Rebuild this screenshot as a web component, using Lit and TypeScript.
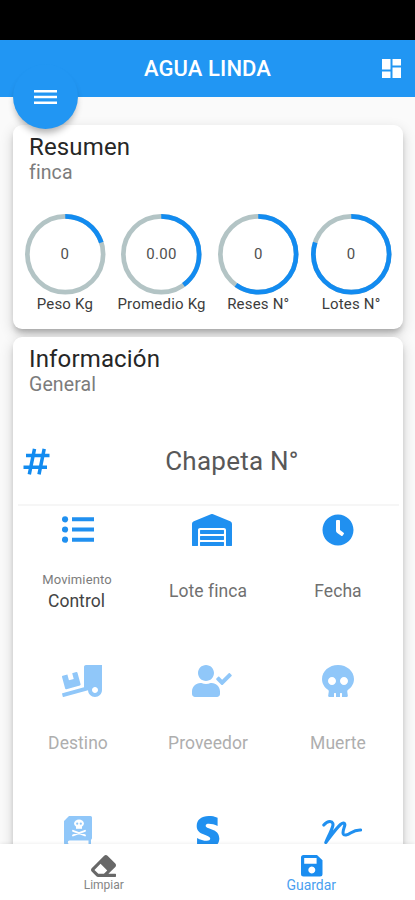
import { LitElement, html, css, svg } from "lit";
import { customElement, property } from "lit/decorators.js";

const icons: Record<string, unknown> = {
  menu: svg`<svg width="23" height="14" viewBox="0 0 23 14"><path fill="currentColor" d="M0 .1h23v2.500H0zM0 5.800h23v2.500H0zM0 11.500h23V14H0z"/></svg>`,
  dashboard: svg`<svg width="19" height="19" viewBox="0 0 19 19"><path fill="currentColor" d="M0 0h8.500v10.600H0zM0 12.600h8.500V19H0zM10.500 0H19v6.400h-8.500zM10.500 8.400H19V19h-8.500z"/></svg>`,
  hash: svg`<svg width="27" height="27" viewBox="0 0 27 27"><path fill="none" stroke="currentColor" stroke-width="3.500" d="M3 7.500h23.500M.5 19.300h23.500M11.500 .8L6.300 26.300M21.200 .8L16 26.300"/></svg>`,
  list: svg`<svg width="32" height="32" viewBox="0 0 32 32"><g fill="currentColor"><circle cx="3" cy="5.300" r="3.100"/><circle cx="3" cy="15.500" r="3.100"/><circle cx="3" cy="25.700" r="3.100"/><path d="M10 3.300h22v4H10zM10 13.500h22v4H10zM10 23.700h22v4H10z"/></g></svg>`,
  warehouse: svg`<svg width="40" height="32" viewBox="0 0 640 512"><path fill="currentColor" d="M504 352H136.400c-4.400 0-8 3.600-8 8l-.1 48c0 4.400 3.600 8 8 8H504c4.400 0 8-3.600 8-8v-48c0-4.400-3.600-8-8-8zm0 96H136.100c-4.400 0-8 3.600-8 8l-.1 48c0 4.400 3.600 8 8 8h368c4.400 0 8-3.600 8-8v-48c0-4.400-3.600-8-8-8zm0-192H136.600c-4.400 0-8 3.600-8 8l-.1 48c0 4.400 3.600 8 8 8H504c4.400 0 8-3.600 8-8v-48c0-4.400-3.600-8-8-8zm106.500-139L338.400 3.700a48.150 48.150 0 0 0-36.900 0L29.500 117C11.700 124.500 0 141.900 0 161.300V504c0 4.400 3.600 8 8 8h80c4.400 0 8-3.600 8-8V256c0-17.600 14.600-32 32.600-32h382.800c18 0 32.600 14.400 32.600 32v248c0 4.400 3.600 8 8 8h80c4.400 0 8-3.600 8-8V161.300c0-19.400-11.700-36.800-29.500-44.300z"/></svg>`,
  clock: svg`<svg width="32" height="32" viewBox="0 0 512 512"><path fill="currentColor" d="M256,8C119,8,8,119,8,256S119,504,256,504,504,393,504,256,393,8,256,8Zm92.490,313h0l-20,25a16,16,0,0,1-22.490,2.500h0l-67-49.720a40,40,0,0,1-15-31.230V112a16,16,0,0,1,16-16h32a16,16,0,0,1,16,16V256l58,42.500A16,16,0,0,1,348.490,321Z"/></svg>`,
  truck: svg`<svg width="40" height="32" viewBox="0 0 640 512"><path fill="currentColor" d="M50.200 375.600c2.300 8.500 11.100 13.600 19.600 11.300l216.400-58c8.500-2.300 13.600-11.100 11.300-19.600l-49.700-185.500c-2.300-8.500-11.100-13.600-19.600-11.300L163 130l24.800 92.700-77 20.600-24.800-92.700-74.100 19.900C3.400 172.800-1.700 181.600.6 190.100l49.600 185.500zM384 0c-17.700 0-32 14.300-32 32v323.600L5.900 450c-4.300 1.200-6.800 5.600-5.600 9.800l12.600 46.300c1.200 4.300 5.600 6.800 9.800 5.600l393.700-107.400C418.800 464.100 467.600 512 528 512c61.900 0 112-50.100 112-112V0H384zm144 448c-26.500 0-48-21.500-48-48s21.500-48 48-48 48 21.500 48 48-21.500 48-48 48z"/></svg>`,
  user: svg`<svg width="40" height="32" viewBox="0 0 640 512"><path fill="currentColor" d="M224 256c70.700 0 128-57.300 128-128S294.700 0 224 0 96 57.300 96 128s57.300 128 128 128zm89.600 32h-16.700c-22.200 10.200-46.900 16-72.900 16s-50.600-5.800-72.900-16h-16.700C60.200 288 0 348.200 0 422.400V464c0 26.500 21.500 48 48 48h352c26.500 0 48-21.500 48-48v-41.600c0-74.200-60.200-134.400-134.400-134.400zM633.800 158.800l-28.100-28.400c-4.900-4.900-12.800-5-17.800-.1l-106 105.100-46-46.400c-4.900-4.900-12.800-5-17.800-.1l-28.400 28.100c-4.900 4.900-5 12.800-.1 17.800l82.600 83.300c4.900 4.900 12.800 5 17.800.1l143.600-142.500c4.900-4.900 5-12.900.2-16.800z"/></svg>`,
  skull: svg`<svg width="32" height="32" viewBox="0 0 512 512"><path fill="currentColor" d="M256 0C114.600 0 0 100.300 0 224c0 70.100 36.900 132.600 94.500 173.700 9.600 6.900 15.200 18.100 13.500 29.900l-9.400 66.200c-1.400 9.600 6 18.200 15.700 18.200H192v-56c0-4.400 3.600-8 8-8h16c4.400 0 8 3.600 8 8v56h64v-56c0-4.400 3.600-8 8-8h16c4.400 0 8 3.600 8 8v56h77.700c9.700 0 17.100-8.600 15.700-18.200l-9.400-66.200c-1.700-11.700 3.800-23 13.500-29.900C475.100 356.600 512 294.100 512 224 512 100.300 397.400 0 256 0zm-96 320c-35.300 0-64-28.700-64-64s28.700-64 64-64 64 28.700 64 64-28.700 64-64 64zm192 0c-35.300 0-64-28.700-64-64s28.700-64 64-64 64 28.700 64 64-28.700 64-64 64z"/></svg>`,
  book: svg`<svg class="book" width="28" height="32" viewBox="0 0 28 32"><path fill="currentColor" d="M5 0h21.500Q28 0 28 1.500V22q0 1-1 1.800v4.700q1 .5 1 1.500t-1.500 2H6q-6 0-6-6V5z"/><path fill="#fff" d="M5.500 24.500h19v3.600h-19q-1.700 0-1.700-1.800t1.700-1.800z"/><ellipse cx="15" cy="7.400" rx="4.900" ry="3.900" fill="#fff"/><path fill="#fff" d="M12 9.500h6v3.300h-6z"/><g fill="currentColor"><circle cx="13.200" cy="7.700" r="1.100"/><circle cx="16.800" cy="7.700" r="1.100"/></g><path fill="none" stroke="#fff" stroke-width="1.900" stroke-linecap="round" d="M9 14.800l12 4.600M21 14.800L9 19.400"/></svg>`,
  stripe: svg`<svg class="stripe" width="24" height="32" viewBox="0 0 384 512"><path fill="currentColor" d="M155.300 154.600c0-22.300 18.600-30.900 48.400-30.900 43.400 0 98.500 13.300 141.900 36.700V26.100C298.300 7.200 251.100 0 203.800 0 88.100 0 11 60.400 11 161.400c0 157.900 216.800 132.300 216.800 200.400 0 26.400-22.900 34.900-54.700 34.900-47.200 0-108.200-19.500-156.100-45.500v128.500a396.090 396.090 0 0 0 156 32.400c118.600 0 200.300-51 200.300-153.600 0-170.200-218-139.700-218-203.900z"/></svg>`,
  signature: svg`<svg width="40" height="32" viewBox="0 0 40 32"><path fill="none" stroke="currentColor" stroke-width="3.100" stroke-linecap="round" stroke-linejoin="round" d="M1.800 9C4 6.500 6 5.400 8 5.500C11 5.700 11.500 8 10.500 11C9 16 5.500 22 3.800 26.500C8 21 14 12.500 18.500 8.500C21.500 6 23.500 7 22.600 10C21.800 12.800 20.500 15.500 21.200 17.700C22 20 25.500 19 28.500 17C32 14.800 34 13.800 38.800 14"/></svg>`,
  eraser: svg`<svg width="25" height="22" viewBox="0 32 512 448"><path fill="currentColor" d="M497.941 273.941c18.745-18.745 18.745-49.137 0-67.882l-160-160c-18.745-18.745-49.136-18.746-67.883 0l-256 256c-18.745 18.745-18.745 49.137 0 67.882l96 96A48.004 48.004 0 0 0 144 480h356c6.627 0 12-5.373 12-12v-40c0-6.627-5.373-12-12-12H355.883l142.058-142.059zm-302.627-62.627l137.373 137.373L265.373 416H150.628l-80-80 124.686-124.686z"/></svg>`,
  save: svg`<svg width="22" height="22" viewBox="0 0 22 22"><path fill="currentColor" fill-rule="evenodd" d="M2.500 0H16l5.500 5.300V19q0 2.500-2.500 2.500H2.500Q0 21.500 0 19V2.500Q0 0 2.500 0zM3.200 3v5.800h12.400V3zM10.800 11.400a3.500 3.500 0 1 0 .01 0z"/></svg>`,
};

@customElement("ring-gauge")
class RingGauge extends LitElement {
  @property() value = "0";
  @property() label = "";
  @property({ type: Number }) percent = 0;

  static styles = css`
    :host { display: flex; flex-direction: column; align-items: center; }
    svg { display: block; overflow: visible; }
    .dial { display: grid; place-items: center; width: 80.500px; height: 81px; }
    .dial > * { grid-area: 1 / 1; }
    .value { font-size: 15px; letter-spacing: 0.3px; color: #505050; }
    .label { font-size: 15px; letter-spacing: 0.2px; line-height: 18px; color: #3c3c3c; white-space: nowrap; }
    .track { stroke: #b3c4c5; }
    .arc { stroke: #128bf0; }
  `;

  render() {
    return html`
      <div class="dial">
        <svg width="80.500" height="80.500" viewBox="-40.250 -40.250 80.500 80.500" fill="none" stroke-width="4.700">
          <circle class="track" r="37.900" />
          <circle class="arc" r="37.900" pathLength="100" stroke-dasharray="${this.percent} 100" transform="rotate(-90)" />
        </svg>
        <span class="value">${this.value}</span>
      </div>
      <span class="label">${this.label}</span>
    `;
  }
}

interface Tile {
  icon: string;
  label: string;
  caption?: string;
  disabled?: boolean;
}

const gauges = [
  { value: "0", label: "Peso Kg", percent: 20 },
  { value: "0.00", label: "Promedio Kg", percent: 40 },
  { value: "0", label: "Reses N°", percent: 60 },
  { value: "0", label: "Lotes N°", percent: 80 },
];

const tiles: Tile[] = [
  { icon: "list", label: "Control", caption: "Movimiento" },
  { icon: "warehouse", label: "Lote finca" },
  { icon: "clock", label: "Fecha" },
  { icon: "truck", label: "Destino", disabled: true },
  { icon: "user", label: "Proveedor", disabled: true },
  { icon: "skull", label: "Muerte", disabled: true },
  { icon: "book", label: "", disabled: true },
  { icon: "stripe", label: "" },
  { icon: "signature", label: "" },
];

@customElement("app-root")
class AppRoot extends LitElement {
  static styles = css`
    :host {
      display: flex; flex-direction: column; height: 900px; overflow: hidden;
      background: #fafafa; font-family: Roboto, "Liberation Sans", sans-serif; color: #222;
    }
    svg { display: block; flex: none; }
    .status { height: 40px; background: #000; flex: none; }
    .bar {
      position: relative; z-index: 2; flex: none; height: 57px; background: #2196f3; color: #fff;
      display: grid; grid-template-columns: 1fr auto 1fr; align-items: center;
    }
    .title { grid-column: 2; font-size: 22px; font-weight: 500; letter-spacing: 0.1px; }
    .dash { justify-self: end; margin-right: 14px; }
    .fab {
      position: absolute; left: 12.500px; top: 24px; width: 65px; height: 65px; border-radius: 50%;
      background: #2196f3; display: grid; place-items: center;
      box-shadow: 0 6px 7px -2px rgba(0, 0, 0, 0.3);
    }
    .content { flex: 1; min-height: 0; overflow: hidden; padding: 28px 12px 0 13px; display: flex; flex-direction: column; gap: 8px; }
    .card {
      background: #fff; border-radius: 9px; flex: none; box-sizing: border-box;
      box-shadow: 0 5px 6px -2px rgba(0, 0, 0, 0.26), 0 5px 13px 1px rgba(0, 0, 0, 0.14);
    }
    .summary { height: 204px; padding-top: 8px; }
    .info { height: 640px; padding-top: 8px; }
    .head { padding-left: 16px; }
    .h1 { font-size: 24px; letter-spacing: 0.15px; line-height: 28px; color: #262626; }
    .h2 { font-size: 19.500px; letter-spacing: 0.1px; line-height: 23px; color: #7c7c7c; }
    .gauges { display: flex; justify-content: center; gap: 12.300px; margin: 29.500px 0 0 0; }
    .field {
      display: grid; grid-template-columns: 60px 1fr; align-items: center; margin: 24px 4px 0 5px; padding-bottom: 2px;
      height: 82px; border-bottom: 2px solid #f6f6f6; color: #128bf0;
    }
    .field svg { margin-left: 5px; }
    .name { color: #585858; font-size: 26px; letter-spacing: 0.25px; text-align: center; padding-right: 13px; }
    .grid { display: grid; grid-template-columns: repeat(3, 130px); grid-auto-rows: 151px; padding-top: 8px; }
    .tile { display: flex; flex-direction: column; align-items: center; color: #2090f0; }
    .tile.off { color: #90c7f9; }
    .icon { width: 32px; height: 32px; display: flex; }
    .book { margin-left: 2px; }
    .stripe { margin-left: 4px; }
    .text {
      height: 50px; margin-top: 20px; display: flex; flex-direction: column; align-items: center;
      justify-content: center; font-size: 17.500px; line-height: 22px; letter-spacing: 0.05px; color: #707070;
    }
    .caption { font-size: 13px; line-height: 20px; letter-spacing: 0.1px; color: #7c7c7c; margin-left: -2px; }
    .filled { color: #444; margin-left: -3px; }
    .off .text { color: #aeaeae; padding-top: 1px; }
    .nav {
      position: relative; z-index: 1; flex: none; height: 56px; background: #fff; display: grid; grid-template-columns: 1fr 1fr;
      box-shadow: 0 -1px 3px rgba(0, 0, 0, 0.06);
    }
    .item { display: flex; flex-direction: column; align-items: center; padding-top: 10.500px; color: #686868; font-size: 12px; line-height: 17px; }
    .item span { color: #858585; }
    .item.active { color: #1a8df0; font-size: 14px; }
    .item.active svg { margin-left: 1px; }
    .item.active span { color: #4a9ff0; }
  `;

  private tile(t: Tile) {
    return html`<div class="tile ${t.disabled ? "off" : ""}">
      <div class="icon">${icons[t.icon]}</div>
      <div class="text">
        ${t.caption ? html`<span class="caption">${t.caption}</span>` : ""}
        <span class="${t.caption ? "filled" : ""}">${t.label}</span>
      </div>
    </div>`;
  }

  render() {
    return html`
      <div class="status"></div>
      <header class="bar">
        <div class="title">AGUA LINDA</div>
        <div class="dash">${icons.dashboard}</div>
        <div class="fab">${icons.menu}</div>
      </header>
      <main class="content">
        <section class="card summary">
          <div class="head"><div class="h1">Resumen</div><div class="h2">finca</div></div>
          <div class="gauges">
            ${gauges.map((g) => html`<ring-gauge .value=${g.value} .label=${g.label} .percent=${g.percent}></ring-gauge>`)}
          </div>
        </section>
        <section class="card info">
          <div class="head"><div class="h1">Información</div><div class="h2">General</div></div>
          <div class="field">${icons.hash}<div class="name">Chapeta N°</div></div>
          <div class="grid">${tiles.map((t) => this.tile(t))}</div>
        </section>
      </main>
      <nav class="nav">
        <div class="item">${icons.eraser}<span>Limpiar</span></div>
        <div class="item active">${icons.save}<span>Guardar</span></div>
      </nav>
    `;
  }
}
